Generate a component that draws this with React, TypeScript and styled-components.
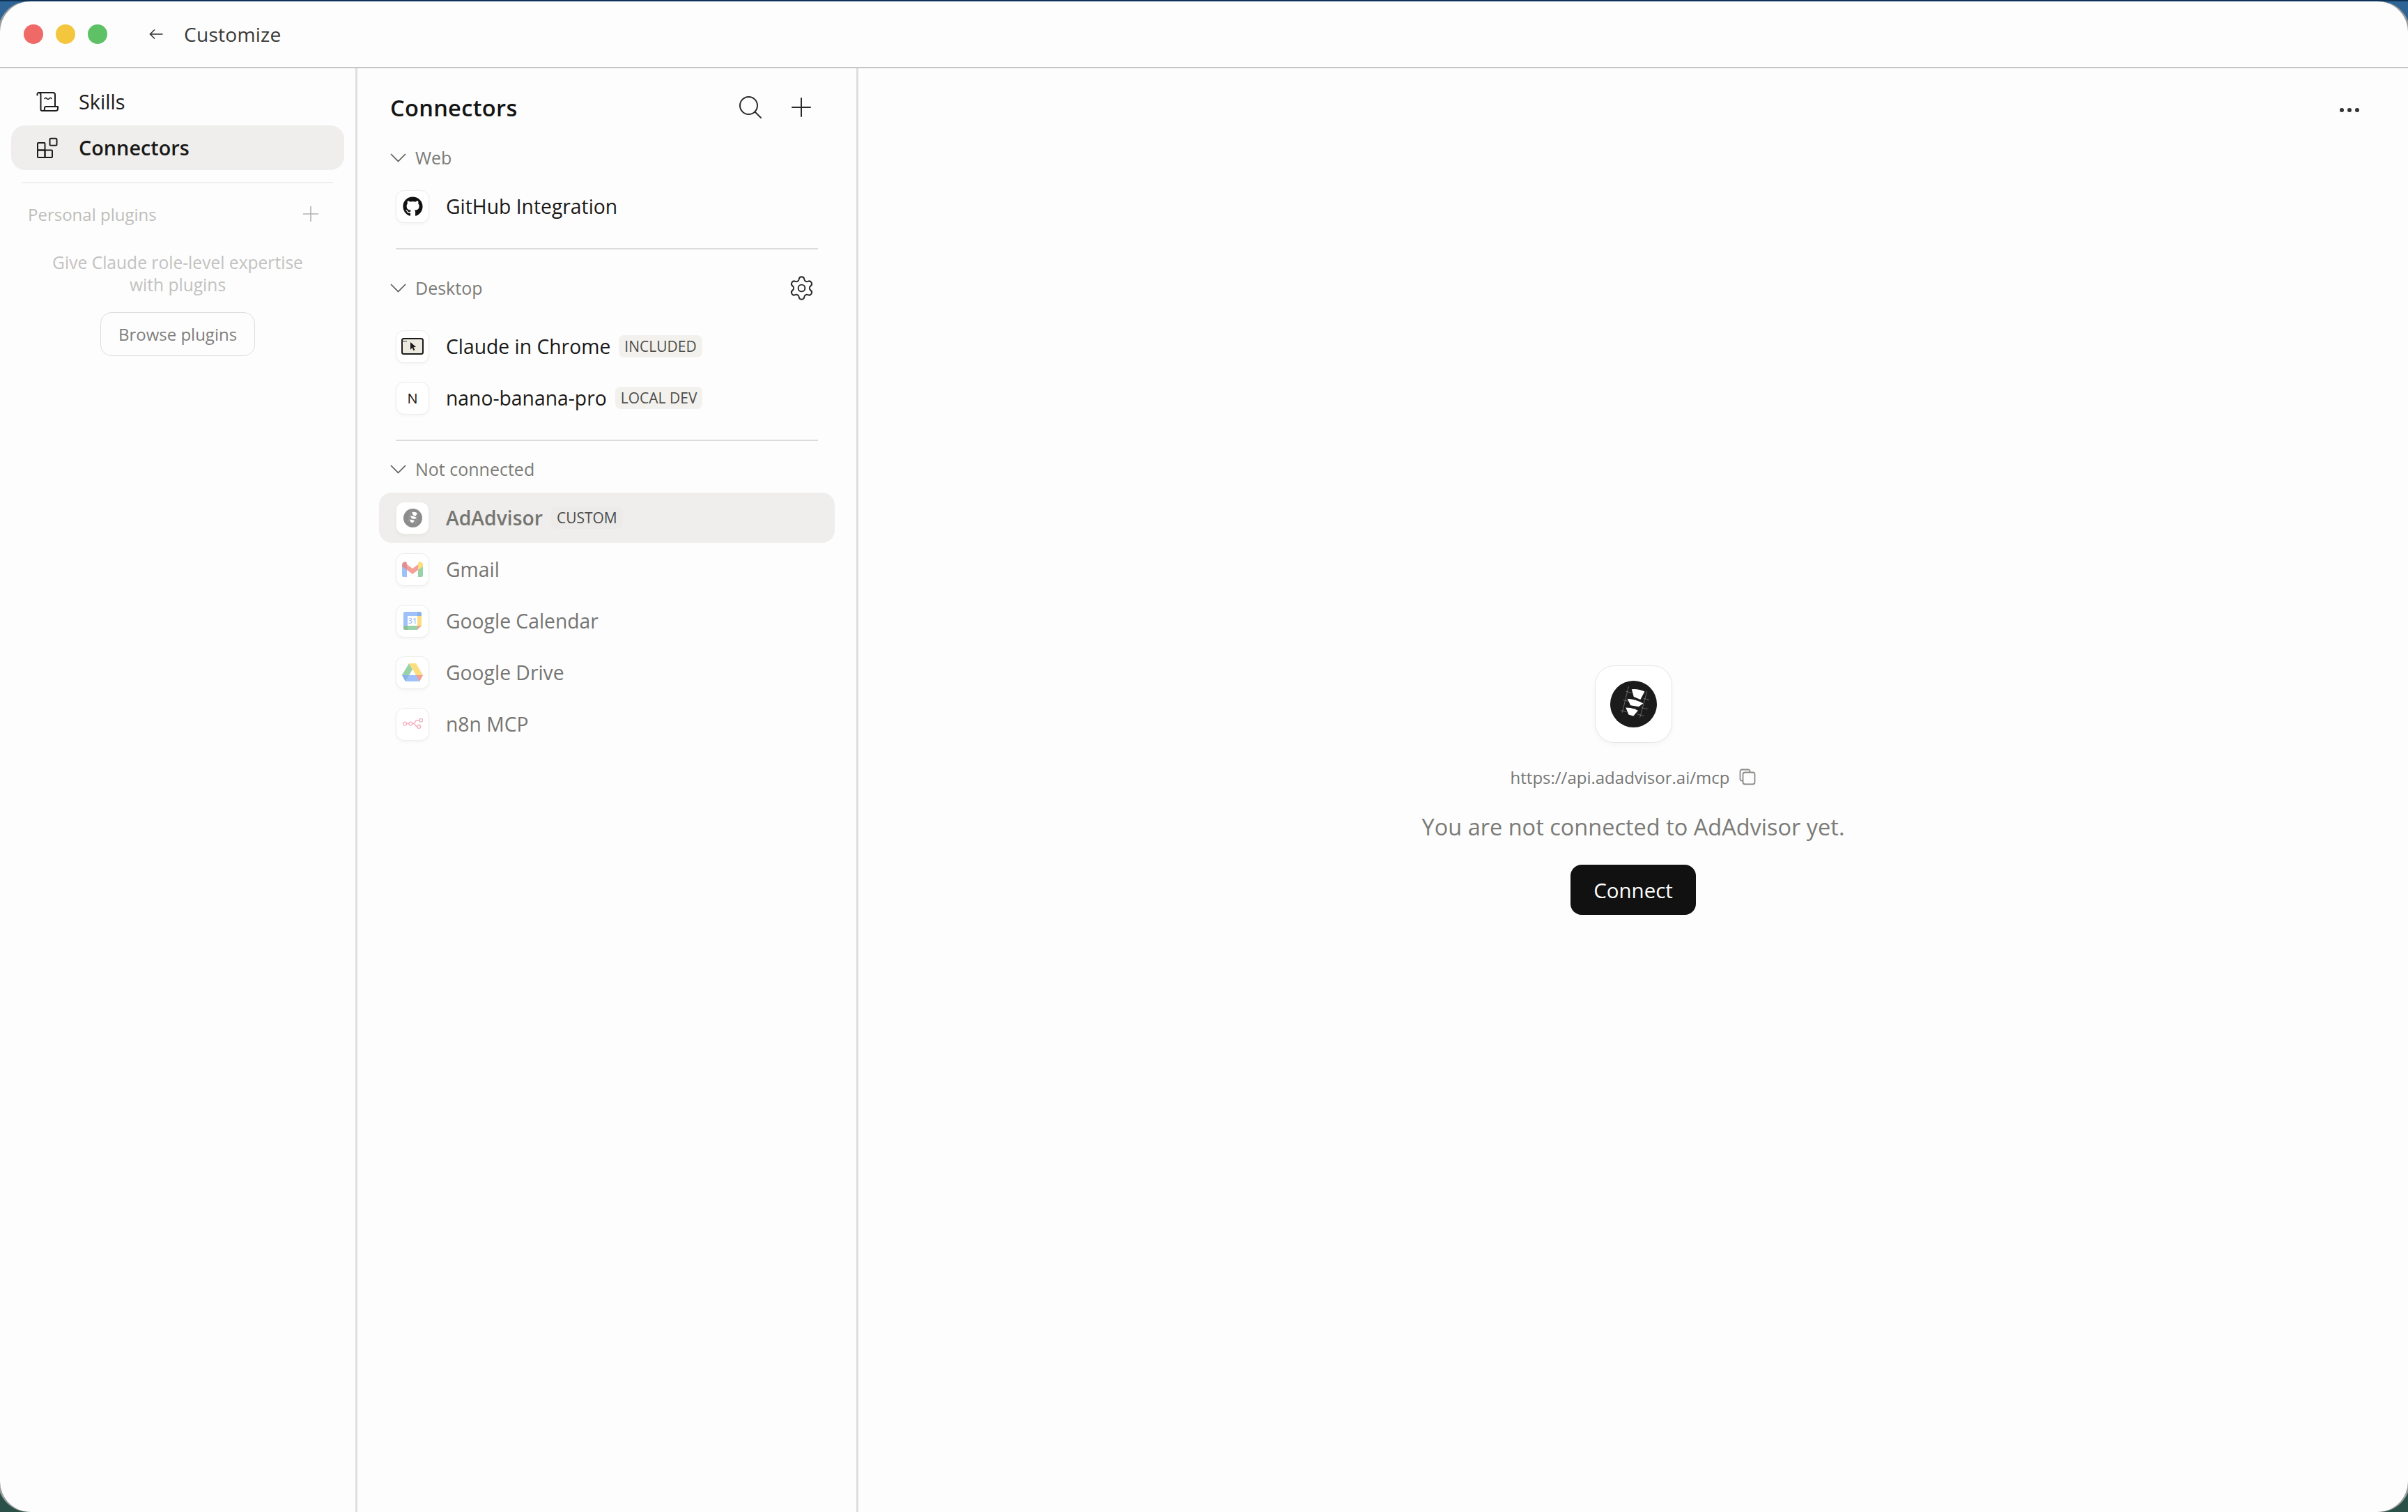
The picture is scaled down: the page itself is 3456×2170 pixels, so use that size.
import React from 'react';
import styled, { createGlobalStyle } from 'styled-components';
import { FaGithub } from 'react-icons/fa';
import { Settings } from 'lucide-react';

const Global = createGlobalStyle`
  html, body { margin: 0; padding: 0; height: 100%; }
  body { font-family: "Open Sans", "Liberation Sans", sans-serif; background: #2b5c8c; }
  #root { height: 100%; }
  * { box-sizing: border-box; }
`;

const Desktop = styled.div`
  width: 3456px;
  height: 2170px;
  overflow: hidden;
  padding-top: 2px;
  background: linear-gradient(180deg, #0f3358 0, #0f3358 2px, #2e6496 2px, #2b5f7f 50%, #2a5048 100%);
`;
const Window = styled.div`
  height: 2168px;
  background: #fdfdfd;
  border-radius: 44px;
  box-shadow: -3px 0 0 #9b9b9b, 3px 0 0 #9b9b9b;
  display: flex;
  flex-direction: column;
  overflow: hidden;
`;
const TitleBar = styled.header`
  height: 96px;
  flex: none;
  display: flex;
  align-items: center;
  padding: 0 0 0 34px;
  border-bottom: 2px solid #c6c6c6;
`;
const Light = styled.span<{ $c: string }>`
  width: 28px;
  height: 28px;
  border-radius: 50%;
  margin-right: 18px;
  background: ${p => p.$c};
`;
const Back = styled.svg`
  margin-left: 42px;
  margin-right: 30px;
  width: 20px;
  height: 16px;
  fill: none;
  stroke: #333;
  stroke-width: 1.6;
`;
const Title = styled.span`
  font-size: 28.2px;
  letter-spacing: 0.2px;
  color: #3a3a38;
`;
const Body = styled.div`
  flex: 1;
  display: flex;
  min-height: 0;
`;
const Sidebar = styled.aside`
  width: 513px;
  flex: none;
  border-right: 3px solid #dedede;
  padding: 16px 16px 0;
`;
const NavRow = styled.div<{ $active?: boolean }>`
  width: 478px;
  height: 64px;
  margin-bottom: 2px;
  border-radius: 20px;
  display: flex;
  align-items: center;
  padding-left: 36px;
  gap: 29px;
  font-size: 28.8px;
  font-weight: ${p => (p.$active ? 600 : 400)};
  color: #191918;
  background: ${p => (p.$active ? '#efeeec' : 'transparent')};
  & > span { margin-top: -2px; }
`;
const NavIcon = styled.svg`
  width: 32px;
  height: 28px;
  flex: none;
  fill: none;
  stroke: #1c1c1b;
  stroke-width: 2;
  stroke-linecap: round;
  stroke-linejoin: round;
  overflow: visible;
`;
const SideRule = styled.div`
  height: 2px;
  margin: 17px 16px 0;
  background: #eeeeee;
`;
const PluginHead = styled.div`
  display: flex;
  align-items: center;
  justify-content: space-between;
  height: 40px;
  margin-top: 24px;
  padding: 0 37px 0 24px;
  font-size: 24px;
  color: #bdbdbb;
`;
const PluginPlus = styled.svg`
  width: 22px;
  height: 22px;
  stroke: #b2b2b0;
  stroke-width: 1.6;
`;
const PluginHint = styled.p`
  margin: 34px 0 0;
  text-align: center;
  font-size: 24.6px;
  line-height: 32px;
  color: #c2c2c0;
`;
const BrowseWrap = styled.div`
  display: flex;
  justify-content: center;
  margin-top: 23px;
`;
const Browse = styled.button`
  width: 222px;
  height: 63px;
  border: 1.5px solid #dedede;
  border-radius: 16px;
  background: #fdfdfd;
  font: 500 24px "Open Sans", sans-serif;
  color: #7f7f7d;
  padding: 0;
`;
const Middle = styled.section`
  width: 719px;
  flex: none;
  border-right: 3px solid #dedede;
  padding: 20px 31px 0 31px;
`;
const MiddleHead = styled.div`
  height: 72px;
  display: flex;
  align-items: center;
  padding: 0 33px 0 16px;
  margin-bottom: 9px;
`;
const MiddleTitle = styled.h2`
  margin: 0;
  flex: 1;
  font-size: 32.6px;
  letter-spacing: 0.3px;
  font-weight: 600;
  color: #151514;
`;
const HeadIcon = styled.svg`
  fill: none;
  stroke: #2a2a29;
  stroke-width: 2;
  stroke-linecap: round;
`;
const SearchIcon = styled(HeadIcon)`
  width: 34px;
  height: 34px;
  margin-right: 41px;
`;
const PlusIcon = styled(HeadIcon)`
  width: 30px;
  height: 30px;
`;
const SectionHead = styled.div<{ $tall?: boolean }>`
  height: ${p => (p.$tall ? 84 : 54)}px;
  margin-bottom: ${p => (p.$tall ? 6 : 7)}px;
  display: flex;
  align-items: center;
  padding: 0 28px 0 16px;
  gap: 13px;
  font-size: 25px;
  color: #7b7b77;
`;
const Chevron = styled.svg`
  width: 23px;
  height: 13px;
  fill: none;
  stroke: #5c5c59;
  stroke-width: 1.7;
`;
const Gear = styled.span`
  margin-left: auto;
  display: flex;
  color: #2a2a29;
`;
const Rows = styled.div`
  display: flex;
  flex-direction: column;
  gap: 2px;
`;
const Row = styled.div<{ $on?: boolean }>`
  height: 72px;
  display: flex;
  align-items: center;
  padding-left: 24px;
  border-radius: 18px;
  background: ${p => (p.$on ? '#efeeec' : 'transparent')};
`;
const Tile = styled.div`
  width: 48px;
  height: 47px;
  flex: none;
  border-radius: 12px;
  background: #fff;
  border: 1.5px solid #ececea;
  box-shadow: 0 2px 4px rgba(0, 0, 0, 0.04);
  display: flex;
  align-items: center;
  justify-content: center;
  color: #151514;
  font-size: 20px;
  font-weight: 500;
`;
const Faded = styled.span`
  display: flex;
  opacity: 0.5;
`;
const RowName = styled.span<{ $dim?: boolean; $strong?: boolean }>`
  margin-left: 24px;
  font-size: 28.3px;
  font-weight: ${p => (p.$strong ? 600 : 400)};
  color: ${p => (p.$dim ? '#757571' : '#191918')};
`;
const Badge = styled.span<{ $on?: boolean }>`
  margin-left: 12px;
  height: 32px;
  padding: 0 8px;
  border-radius: 8px;
  display: flex;
  align-items: center;
  font-size: 21px;
  color: #4d4d4a;
  background: ${p => (p.$on ? '#ecebe9' : '#f2f1ee')};
`;
const Rule = styled.div`
  height: 2px;
  margin: 24px 24px 13px;
  background: #dcdcdc;
`;
const Main = styled.main`
  flex: 1;
  position: relative;
  display: flex;
  flex-direction: column;
  align-items: center;
  padding-top: 857px;
`;
const More = styled.svg`
  position: absolute;
  top: 56px;
  right: 70px;
  width: 28px;
  height: 8px;
  fill: #333;
`;
const LogoCard = styled.div`
  width: 111px;
  height: 111px;
  border-radius: 28px;
  background: #fff;
  border: 1.5px solid #e6e6e4;
  box-shadow: 0 3px 6px rgba(0, 0, 0, 0.04);
  display: flex;
  align-items: center;
  justify-content: center;
`;
const UrlLine = styled.div`
  display: flex;
  align-items: center;
  gap: 14px;
  margin-top: 31px;
  height: 36px;
  font-size: 24px;
  color: #777774;
`;
const CopyIcon = styled.svg`
  width: 24px;
  height: 24px;
  fill: none;
  stroke: #8a8a87;
  stroke-width: 1.8;
`;
const Message = styled.p`
  margin: 32px 0 0;
  height: 44px;
  line-height: 44px;
  font-size: 32.5px;
  color: #7b7b77;
`;
const Connect = styled.button`
  margin-top: 32px;
  width: 180px;
  height: 72px;
  border: 0;
  border-radius: 16px;
  background: #111111;
  color: #fff;
  font: 500 29.5px "Open Sans", sans-serif;
  padding: 0;
`;

const AdLogo = ({ size, fill = '#1b1b1b' }: { size: number; fill?: string }) => (
  <svg width={size} height={size} viewBox="0 0 66 66">
    <circle cx="33" cy="33" r="33" fill={fill} />
    <path d="M26 8 17 45M52 15 42 52M22 15l8 2M47 25l8 2M18 27l8 2M44 38l9 2M15 42l8 2M38 47l10 3" stroke="#777" strokeWidth="0.8" fill="none" />
    <path d="M30.300 12Q40 11 48.700 15.300L42.700 26.700 33.300 22.700Z" fill="#fff" />
    <path d="M24.300 25.300Q36 26 46.700 32L40.300 36.700 28.700 34.700Z" fill="#fff" />
    <path d="M22 38Q31 38 39.300 42L32.700 50 26 47.700Z" fill="#fff" />
  </svg>
);

const ChromeIcon = () => (
  <svg width="32" height="24" viewBox="0 0 32 24">
    <rect x="1" y="1" width="30" height="22" rx="2.5" fill="#ece9df" stroke="#1a1a1a" strokeWidth="2" />
    <path d="M3 5h1.600M6 5h1.600" stroke="#1a1a1a" strokeWidth="1.6" />
    <path d="M13 6l8 7-3.600.3 2 4-2 .8-1.800-4L13 17Z" fill="#1a1a1a" />
  </svg>
);

const GmailIcon = () => (
  <svg width="30" height="22" viewBox="0 0 30 22">
    <path d="M0 6v14a2 2 0 0 0 2 2h5V8Z" fill="#4285f4" />
    <path d="M30 6v14a2 2 0 0 1-2 2h-5V8Z" fill="#34a853" />
    <path d="M7 4l8 6 8-6v8l-8 6-8-6Z" fill="#ea4335" />
    <path d="M0 4.500C0 1 4-.9 6.500 1L7 4v8L0 7Z" fill="#c5221f" />
    <path d="M30 4.500C30 1 26-.9 23.500 1L23 4v8l7-5Z" fill="#fbbc04" />
  </svg>
);

const CalendarIcon = () => (
  <svg width="26" height="26" viewBox="0 0 26 26">
    <path d="M6 0h14v6H6Z" fill="#4285f4" />
    <path d="M20 0h3.500a2.500 2.500 0 0 1 2.500 2.500V6h-6Z" fill="#1967d2" />
    <path d="M0 6h6v14H0V6Z" fill="#4285f4" />
    <path d="M0 2.500A2.500 2.500 0 0 1 2.500 0H6v6H0Z" fill="#4285f4" />
    <path d="M20 6h6v14h-6Z" fill="#fbbc04" />
    <path d="M6 20h14v6H6Z" fill="#34a853" />
    <path d="M0 20h6v6H2.500A2.500 2.500 0 0 1 0 23.500Z" fill="#188038" />
    <path d="M20 20h6l-6 6Z" fill="#ea4335" />
    <text x="13" y="17" textAnchor="middle" fontSize="11" fontWeight="600" fontFamily="Open Sans" fill="#4285f4">31</text>
  </svg>
);

const DriveIcon = () => (
  <svg width="30" height="26" viewBox="0 0 30 26">
    <path d="M10 0 0 17l5 9 10-17.400Z" fill="#34a853" />
    <path d="M10 0h10l10 17H20Z" fill="#fbbc04" />
    <path d="M5 26h20l5-9H10Z" fill="#4285f4" />
    <path d="M0 17h10l-5 9Z" fill="#1967d2" />
    <path d="M30 17H20l5 9Z" fill="#ea4335" />
  </svg>
);

const N8nIcon = () => (
  <svg width="29" height="17" viewBox="0 0 85 50" fill="none" stroke="#e8637f" strokeWidth="4">
    <circle cx="9" cy="22" r="7" />
    <circle cx="33" cy="22" r="7" />
    <circle cx="68" cy="35" r="7" />
    <circle cx="77" cy="8" r="7" />
    <path d="M16 22h10M40 22h6c8 0 4-14 14-14h10M46 22c8 0 5 13 15 13" />
  </svg>
);

export default function App() {
  return (
    <Desktop>
      <Global />
      <Window>
        <TitleBar>
          <Light $c="#ef6a66" />
          <Light $c="#f4c63e" />
          <Light $c="#5fc166" />
          <Back viewBox="0 0 20 16">
            <path d="M19.500 8H1.500M8 1.500 1.500 8 8 14.500" />
          </Back>
          <Title>Customize</Title>
        </TitleBar>
        <Body>
          <Sidebar>
            <NavRow>
              <NavIcon viewBox="0 0 32 28">
                <path d="M1.500 4.500V3a2 2 0 0 1 2-2H24a3 3 0 0 1 3 3v17" />
                <path d="M3.500 1a3 3 0 0 1 3 3v21a2 2 0 0 0 2 2H28a3 3 0 0 0 3-3v-3H14a2 2 0 0 0-2 2v1.500a2.500 2.500 0 0 1-2.500 2.500" />
                <path d="M12 9.500c1.200-1.300 2.300-1.300 3.300 0s2.200 1.300 3.300 0 2.300-1.300 3.300 0" strokeWidth="1.500" />
              </NavIcon>
              <span>Skills</span>
            </NavRow>
            <NavRow $active>
              <NavIcon viewBox="-2 0 32 28">
                <rect x="0" y="7" width="10.500" height="10.500" rx="1" />
                <rect x="0" y="17.500" width="10.500" height="10.500" rx="1" />
                <rect x="10.500" y="17.500" width="10.500" height="10.500" rx="1" />
                <rect x="17.500" y="0.700" width="10" height="10" rx="1.500" />
              </NavIcon>
              <span>Connectors</span>
            </NavRow>
            <SideRule />
            <PluginHead>
              <span>Personal plugins</span>
              <PluginPlus viewBox="0 0 22 22">
                <path d="M11 0v22M0 11h22" />
              </PluginPlus>
            </PluginHead>
            <PluginHint>
              Give Claude role-level expertise
              <br />
              with plugins
            </PluginHint>
            <BrowseWrap>
              <Browse>Browse plugins</Browse>
            </BrowseWrap>
          </Sidebar>
          <Middle>
            <MiddleHead>
              <MiddleTitle>Connectors</MiddleTitle>
              <SearchIcon viewBox="0 0 34 34">
                <circle cx="14.500" cy="14.500" r="12.500" />
                <path d="M23.500 23.500 32 32" />
              </SearchIcon>
              <PlusIcon viewBox="0 0 30 30">
                <path d="M15 2v26M2 15h26" />
              </PlusIcon>
            </MiddleHead>

            <SectionHead>
              <Chevron viewBox="0 0 23 13"><path d="M1 1l10.500 10.500L22 1" /></Chevron>
              <span>Web</span>
            </SectionHead>
            <Rows>
              <Row>
                <Tile><FaGithub size={29} color="#111" /></Tile>
                <RowName>GitHub Integration</RowName>
              </Row>
            </Rows>
            <Rule />

            <SectionHead $tall>
              <Chevron viewBox="0 0 23 13"><path d="M1 1l10.500 10.500L22 1" /></Chevron>
              <span>Desktop</span>
              <Gear><Settings size={39} strokeWidth={1.2} /></Gear>
            </SectionHead>
            <Rows>
              <Row>
                <Tile><ChromeIcon /></Tile>
                <RowName>Claude in Chrome</RowName>
                <Badge>INCLUDED</Badge>
              </Row>
              <Row>
                <Tile>N</Tile>
                <RowName>nano-banana-pro</RowName>
                <Badge>LOCAL DEV</Badge>
              </Row>
            </Rows>
            <Rule />

            <SectionHead>
              <Chevron viewBox="0 0 23 13"><path d="M1 1l10.500 10.500L22 1" /></Chevron>
              <span>Not connected</span>
            </SectionHead>
            <Rows>
              <Row $on>
                <Tile><Faded><AdLogo size={27} /></Faded></Tile>
                <RowName $dim $strong>AdAdvisor</RowName>
                <Badge $on>CUSTOM</Badge>
              </Row>
              <Row>
                <Tile><Faded><GmailIcon /></Faded></Tile>
                <RowName $dim>Gmail</RowName>
              </Row>
              <Row>
                <Tile><Faded><CalendarIcon /></Faded></Tile>
                <RowName $dim>Google Calendar</RowName>
              </Row>
              <Row>
                <Tile><Faded><DriveIcon /></Faded></Tile>
                <RowName $dim>Google Drive</RowName>
              </Row>
              <Row>
                <Tile><Faded><N8nIcon /></Faded></Tile>
                <RowName $dim>n8n MCP</RowName>
              </Row>
            </Rows>
          </Middle>
          <Main>
            <More viewBox="0 0 28 8">
              <circle cx="3" cy="4" r="3" />
              <circle cx="14" cy="4" r="3" />
              <circle cx="25" cy="4" r="3" />
            </More>
            <LogoCard><AdLogo size={67} /></LogoCard>
            <UrlLine>
              <span>https://api.adadvisor.ai/mcp</span>
              <CopyIcon viewBox="0 0 24 24">
                <path d="M5 17.500H4a2.500 2.500 0 0 1-2.500-2.500V4A2.500 2.500 0 0 1 4 1.500h9A2.500 2.500 0 0 1 15.500 4v1" />
                <rect x="5.500" y="5.500" width="17" height="17" rx="3" />
              </CopyIcon>
            </UrlLine>
            <Message>You are not connected to AdAdvisor yet.</Message>
            <Connect>Connect</Connect>
          </Main>
        </Body>
      </Window>
    </Desktop>
  );
}
